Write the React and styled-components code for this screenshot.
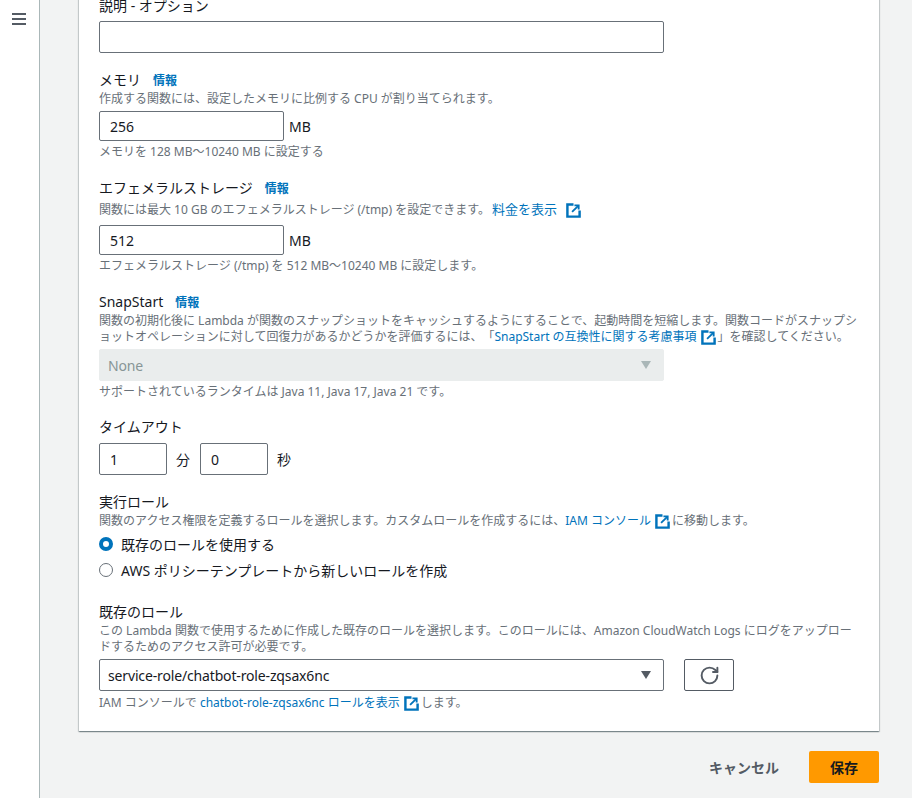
import React from 'react';
import styled, { createGlobalStyle } from 'styled-components';
import { RotateCw } from 'lucide-react';

const GlobalStyle = createGlobalStyle`
  html, body {
    margin: 0;
    padding: 0;
    height: 100%;
    overflow: hidden;
    background: #f2f3f3;
    font-family: "Noto Sans", "Noto Sans CJK JP", sans-serif;
    color: #16191f;
    text-spacing-trim: space-all;
    line-break: loose;
  }
`;

const ExternalIcon = ({ wide }) => (
  <ExtSvg viewBox="0 0 16 16" fill="none" stroke="#0073bb" strokeWidth="2.6" $wide={wide}>
    <path d="M8 1.5H1.5v13h13V8" />
    <path d="M6.5 9.5L13 3" strokeWidth="2" />
    <path d="M9 2.5h4.5V7" strokeWidth="2" />
  </ExtSvg>
);

const App = () => {
  return (
    <Page>
      <GlobalStyle />
      <Sidebar>
        <MenuButton aria-label="menu">
          <span />
          <span />
          <span />
        </MenuButton>
      </Sidebar>
      <Main>
        <Card>
          <Field $gap={16}>
            <Label $after={4}>説明 - オプション</Label>
            <TextInput $width={565} $height={32} />
          </Field>

          <Field $gap={17}>
            <Label>
              メモリ<Info>情報</Info>
            </Label>
            <Desc>作成する関数には、設定したメモリに比例する CPU が割り当てられます。</Desc>
            <InputRow>
              <TextInput $width={185} value="256" readOnly />
              <Unit>MB</Unit>
            </InputRow>
            <Hint>メモリを 128 MB～10240 MB に設定する</Hint>
          </Field>

          <Field $gap={17}>
            <Label>
              エフェメラルストレージ<Info>情報</Info>
            </Label>
            <Desc $tall>
              関数には最大 10 GB のエフェメラルストレージ (/tmp) を設定できます。<A $large>料金を表示</A>
              <ExternalIcon wide />
            </Desc>
            <InputRow>
              <TextInput $width={185} value="512" readOnly />
              <Unit>MB</Unit>
            </InputRow>
            <Hint>エフェメラルストレージ (/tmp) を 512 MB～10240 MB に設定します。</Hint>
          </Field>

          <Field $gap={16}>
            <Label>
              SnapStart<Info>情報</Info>
            </Label>
            <Desc>
              関数の初期化後に Lambda が関数のスナップショットをキャッシュするようにすることで、起動時間を短縮します。関数コードがスナップショットオペレーションに対して回復力があるかどうかを評価するには、「<A>SnapStart の互換性に関する考慮事項</A>
              <ExternalIcon />」を確認してください。
            </Desc>
            <Select $disabled>
              None
              <Caret $disabled />
            </Select>
            <Hint>サポートされているランタイムは Java 11, Java 17, Java 21 です。</Hint>
          </Field>

          <Field $gap={16}>
            <Label $after={5}>タイムアウト</Label>
            <InputRow>
              <TextInput $width={68} $height={32} value="1" readOnly />
              <TimeUnit>分</TimeUnit>
              <TextInput $width={68} $height={32} value="0" readOnly />
              <TimeUnit>秒</TimeUnit>
            </InputRow>
          </Field>

          <Field $gap={20}>
            <Label>実行ロール</Label>
            <Desc>
              関数のアクセス権限を定義するロールを選択します。カスタムロールを作成するには、<A>IAM コンソール</A>
              <ExternalIcon />に移動します。
            </Desc>
            <RadioGroup>
              <RadioRow>
                <Radio $checked />
                既存のロールを使用する
              </RadioRow>
              <RadioRow>
                <Radio />
                AWS ポリシーテンプレートから新しいロールを作成
              </RadioRow>
            </RadioGroup>
          </Field>

          <Field $gap={0}>
            <Label>既存のロール</Label>
            <Desc>
              この Lambda 関数で使用するために作成した既存のロールを選択します。このロールには、Amazon CloudWatch Logs にログをアップロードするためのアクセス許可が必要です。
            </Desc>
            <SelectRow>
              <Select>
                service-role/chatbot-role-zqsax6nc
                <Caret />
              </Select>
              <RefreshButton aria-label="refresh">
                <RotateCw size={21} strokeWidth={2.2} />
              </RefreshButton>
            </SelectRow>
            <Hint $top={4}>
              IAM コンソールで <A>chatbot-role-zqsax6nc ロールを表示</A>
              <ExternalIcon />します。
            </Hint>
          </Field>
        </Card>
        <Actions>
          <CancelButton>キャンセル</CancelButton>
          <SaveButton>保存</SaveButton>
        </Actions>
      </Main>
    </Page>
  );
};

const Page = styled.div`
  display: flex;
  height: 798px;
  overflow: hidden;
`;

const Sidebar = styled.aside`
  width: 39px;
  flex: none;
  background: #fff;
  border-right: 1px solid #aab7b8;
`;

const MenuButton = styled.button`
  display: flex;
  flex-direction: column;
  gap: 3px;
  margin: 13px 0 0 12px;
  padding: 0;
  width: 14px;
  border: 0;
  background: none;

  span {
    display: block;
    height: 2px;
    background: #545b64;
  }
`;

const Main = styled.main`
  flex: 1;
  padding-left: 39px;
  padding-right: 33px;
`;

const Card = styled.section`
  margin-top: -10px;
  padding: 5px 20px 20px;
  background: #fff;
  box-shadow: 0 1px 1px 0 rgba(0, 28, 36, 0.3), 1px 1px 1px 0 rgba(0, 28, 36, 0.15),
    -1px 1px 1px 0 rgba(0, 28, 36, 0.15);
`;

const Field = styled.div`
  margin-bottom: ${(p) => p.$gap}px;
`;

const Label = styled.div`
  margin-bottom: ${(p) => p.$after || 0}px;
  font-size: 14px;
  line-height: 22px;
  color: #16191f;
`;

const Info = styled.a`
  margin-left: 12px;
  font-size: 12px;
  line-height: 1;
  font-weight: 700;
  color: #0073bb;
`;

const Desc = styled.div`
  width: 760px;
  font-size: 12px;
  line-height: ${(p) => (p.$tall ? '22px' : '16px')};
  color: #687078;
  margin-bottom: 4px;
`;

const Hint = styled.div`
  margin-top: ${(p) => p.$top || 3}px;
  font-size: 12px;
  line-height: 16px;
  color: #687078;
`;

const A = styled.a`
  margin-left: ${(p) => (p.$large ? '2px' : '0')};
  font-size: ${(p) => (p.$large ? '13px' : '12px')};
  line-height: 1;
  color: #0073bb;
`;

const ExtSvg = styled.svg`
  width: 15px;
  height: 15px;
  margin: -4px 2px -2px ${(p) => (p.$wide ? '9px' : '4px')};
  vertical-align: -2px;
`;

const InputRow = styled.div`
  display: flex;
  align-items: center;
`;

const TextInput = styled.input`
  box-sizing: border-box;
  width: ${(p) => p.$width}px;
  height: ${(p) => p.$height || 30}px;
  padding: 0 10px;
  border: 1px solid #687078;
  border-radius: 2px;
  background: #fff;
  font-family: inherit;
  font-size: 14px;
  color: #16191f;
  outline: none;
`;

const Unit = styled.span`
  margin-left: 5px;
  font-size: 14px;
  color: #16191f;
`;

const TimeUnit = styled.span`
  width: 33px;
  padding-left: 9px;
  box-sizing: border-box;
  font-size: 14px;
  color: #16191f;
`;

const SelectRow = styled.div`
  display: flex;
  align-items: stretch;
  gap: 20px;
`;

const Select = styled.div`
  position: relative;
  box-sizing: border-box;
  width: 565px;
  height: 32px;
  padding: 0 8px;
  display: flex;
  align-items: center;
  border: 1px solid ${(p) => (p.$disabled ? '#eaeded' : '#687078')};
  border-radius: 2px;
  background: ${(p) => (p.$disabled ? '#eaeded' : '#fff')};
  font-size: 14px;
  letter-spacing: -0.15px;
  color: ${(p) => (p.$disabled ? '#879596' : '#16191f')};
`;

const Caret = styled.i`
  position: absolute;
  right: 12px;
  top: 11px;
  width: 0;
  height: 0;
  border-left: 5px solid transparent;
  border-right: 5px solid transparent;
  border-top: 8px solid ${(p) => (p.$disabled ? '#aab7b8' : '#545b64')};
`;

const RefreshButton = styled.button`
  box-sizing: border-box;
  width: 50px;
  height: 32px;
  display: flex;
  align-items: center;
  justify-content: center;
  padding: 0;
  border: 1px solid #545b64;
  border-radius: 2px;
  background: #fff;
  color: #545b64;
`;

const RadioGroup = styled.div`
  display: flex;
  flex-direction: column;
  gap: 4px;
`;

const RadioRow = styled.label`
  display: flex;
  align-items: center;
  gap: 8px;
  height: 22px;
  font-size: 14px;
  color: #16191f;
`;

const Radio = styled.span`
  box-sizing: border-box;
  width: 14px;
  height: 14px;
  border-radius: 50%;
  border: ${(p) => (p.$checked ? '4px solid #0073bb' : '1px solid #687078')};
  background: #fff;
`;

const Actions = styled.div`
  display: flex;
  align-items: center;
  justify-content: flex-end;
  gap: 20px;
  margin-top: 20px;
`;

const CancelButton = styled.button`
  padding: 0 10px;
  height: 32px;
  border: 0;
  background: none;
  font-family: inherit;
  font-size: 14px;
  font-weight: 700;
  color: #545b64;
`;

const SaveButton = styled.button`
  width: 70px;
  height: 32px;
  border: 0;
  border-radius: 2px;
  background: #ff9900;
  font-family: inherit;
  font-size: 14px;
  font-weight: 700;
  color: #16191f;
`;

export default App;
